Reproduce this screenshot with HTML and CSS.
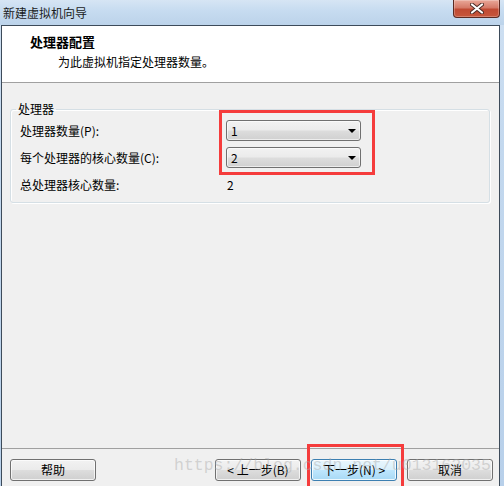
FILE: index.html
```html
<!DOCTYPE html>
<html lang="zh-CN">
<head>
    <meta charset="UTF-8">
    <title>新建虚拟机向导</title>
    <link rel="stylesheet" href="styles.css">
</head>
<body>
    <div class="window">
        <div class="titlebar">
            <span class="title-text">新建虚拟机向导</span>
            <div class="close-btn">
                <svg width="14" height="11" viewBox="0 0 14 11">
                    <path d="M2 1.5 L12 9.5 M12 1.5 L2 9.5" stroke="#4a2a24" stroke-width="4" stroke-linecap="round"/>
                    <path d="M2 1.5 L12 9.5 M12 1.5 L2 9.5" stroke="#ffffff" stroke-width="2.2" stroke-linecap="round"/>
                </svg>
            </div>
        </div>

        <div class="client">
            <div class="wizard-header">
                <div class="header-title">处理器配置</div>
                <div class="header-desc">为此虚拟机指定处理器数量。</div>
            </div>

            <div class="wizard-body">
                <fieldset class="group">
                    <legend>处理器</legend>
                    <div class="form-grid">
                        <label>处理器数量(P):</label>
                        <div class="combo"><span>1</span><i class="arrow"></i></div>

                        <label>每个处理器的核心数量(C):</label>
                        <div class="combo"><span>2</span><i class="arrow"></i></div>

                        <label>总处理器核心数量:</label>
                        <div class="value">2</div>
                    </div>
                </fieldset>
            </div>

            <div class="wizard-footer">
                <button class="btn">帮助</button>
                <div class="nav-buttons">
                    <button class="btn">&lt; 上一步(B)</button>
                    <button class="btn btn-default">下一步(N) &gt;</button>
                    <button class="btn">取消</button>
                </div>
            </div>
        </div>

        <!-- annotation boxes -->
        <div class="mark mark-combos"></div>
        <div class="mark mark-next"></div>
        <div class="watermark">https://blog.csdn.net/u013162035</div>
    </div>
</body>
</html>
```

FILE: styles.css
```css
* {
    margin: 0;
    padding: 0;
    box-sizing: border-box;
}

body {
    font-family: "Noto Sans CJK SC", "Noto Sans", sans-serif;
    font-size: 12px;
    color: #000;
    background: #c4d9ee;
    overflow: hidden;
}

.window {
    position: relative;
    width: 504px;
    height: 486px;
    display: flex;
    flex-direction: column;
    background: linear-gradient(to bottom, #cfe0f2 0%, #c3d8ee 30%, #b8d0ea 100%);
}

/* title bar */
.titlebar {
    height: 25px;
    display: flex;
    align-items: center;
    padding: 0 4px 0 3px;
    background: linear-gradient(to bottom, #d6e5f4 0%, #c6dbf0 45%, #bcd3ea 100%);
}

.title-text {
    font-size: 12px;
    line-height: 16px;
    color: #1b1b1b;
}

.close-btn {
    align-self: flex-start;
    margin-left: auto;
    width: 47px;
    height: 18px;
    display: flex;
    align-items: center;
    justify-content: center;
    border: 1px solid #5b2a22;
    border-top: none;
    border-radius: 0 0 4px 4px;
    background: linear-gradient(to bottom, #e9a899 0%, #d57a68 45%, #c04a33 55%, #c7573c 100%);
    box-shadow: inset 0 0 0 1px rgba(255, 255, 255, 0.25);
}

/* client area */
.client {
    flex: 1;
    display: flex;
    flex-direction: column;
    margin: 0 4px 0 1px;
    border: 1px solid #3d4b5a;
    border-bottom: none;
    background: #f0f0f0;
}

.wizard-header {
    height: 57px;
    background: #fff;
    border-bottom: 1px solid #a0a0a0;
    padding: 7px 0 0 28px;
}

.header-title {
    font-size: 13px;
    font-weight: 700;
    line-height: 18px;
}

.header-desc {
    font-size: 12px;
    line-height: 18px;
    margin-top: 2px;
    padding-left: 28px;
}

.wizard-body {
    flex: 1;
    padding: 18px 9px 0 8px;
}

.group {
    border: 1px solid #d5dfe5;
    border-radius: 3px;
    box-shadow: 1px 1px 0 #fff inset, 1px 1px 0 #fff;
    padding: 3px 10px 7px 9px;
}

.group legend {
    line-height: 16px;
    padding: 0 2px;
    margin-left: -4px;
}

.form-grid {
    display: grid;
    grid-template-columns: 206px 135px;
    grid-auto-rows: 21px;
    row-gap: 6px;
    align-items: center;
}

.form-grid label {
    line-height: 16px;
}

.combo {
    height: 21px;
    display: flex;
    align-items: center;
    justify-content: space-between;
    padding: 0 4px 0 4px;
    border: 1px solid #707070;
    border-radius: 3px;
    background: linear-gradient(to bottom, #f2f2f2 0%, #ebebeb 48%, #dddddd 52%, #d0d0d0 100%);
    box-shadow: inset 0 0 0 1px rgba(255, 255, 255, 0.6);
}

.combo span {
    line-height: 16px;
}

.arrow {
    width: 0;
    height: 0;
    border-left: 4px solid transparent;
    border-right: 4px solid transparent;
    border-top: 4px solid #000;
    margin-top: 1px;
}

.value {
    padding-left: 1px;
    line-height: 16px;
}

/* footer buttons */
.wizard-footer {
    height: 38px;
    border-top: 1px solid #a0a0a0;
    display: flex;
    align-items: flex-start;
    justify-content: space-between;
    padding: 10px 6px 0 8px;
}

.nav-buttons {
    display: flex;
    gap: 10px;
}

.btn {
    width: 86px;
    height: 22px;
    font-family: inherit;
    font-size: 12px;
    line-height: 16px;
    color: #000;
    border: 1px solid #707070;
    border-radius: 3px;
    background: linear-gradient(to bottom, #f2f2f2 0%, #ebebeb 48%, #dddddd 52%, #cfcfcf 100%);
    box-shadow: inset 0 0 0 1px rgba(255, 255, 255, 0.7);
}

.btn-default {
    border-color: #3c7fb1;
    background: linear-gradient(to bottom, #eaf6fd 0%, #d9f0fc 48%, #bee6fd 52%, #a7d9f5 100%);
    box-shadow: inset 0 0 0 1px rgba(255, 255, 255, 0.8);
}

/* red annotation rectangles over the dialog */
.mark {
    position: absolute;
    border: 3px solid #f53c3c;
}

.mark-combos {
    left: 219px;
    top: 110px;
    width: 156px;
    height: 65px;
}

.mark-next {
    left: 307px;
    top: 444px;
    width: 97px;
    height: 46px;
}

.watermark {
    position: absolute;
    left: 174px;
    top: 456px;
    font-family: "Liberation Mono", monospace;
    font-size: 16.5px;
    line-height: 20px;
    color: rgba(170, 170, 170, 0.45);
    pointer-events: none;
    white-space: nowrap;
}
```
